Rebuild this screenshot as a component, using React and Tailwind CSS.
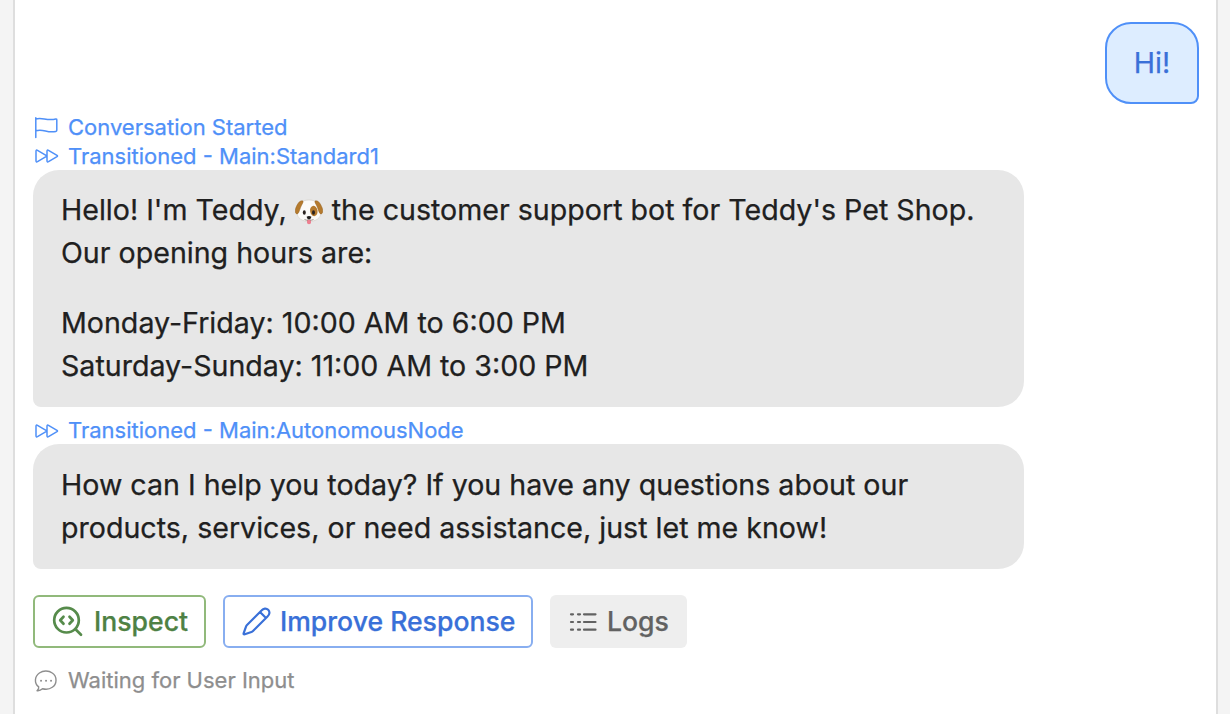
function FlagIcon() {
  return (
    <svg width="25" height="22" viewBox="0 0 25 22" fill="none" stroke="currentColor" strokeWidth="1.5" strokeLinejoin="round" strokeLinecap="round">
      <path d="M1.800 .8V20.500M1.800 2C8 -.2 12.500 4.200 21.800 2Q22.800 1.900 22.800 2.900V13.200Q22.800 14.200 21.800 14.400C13 16.600 9.500 11.200 1.800 13.800" />
    </svg>
  );
}

function ForwardIcon() {
  return (
    <svg width="25" height="16" viewBox="0 0 25 16" fill="none" stroke="currentColor" strokeWidth="1.5" strokeLinejoin="round">
      <path d="M2 3.200Q2 1.500 3.500 2.300L12 7.300Q13 8 12 8.700L3.500 13.700Q2 14.500 2 12.800ZM13 3.200Q13 1.500 14.500 2.300L23 7.300Q24 8 23 8.700L14.500 13.700Q13 14.500 13 12.800Z" />
    </svg>
  );
}

function DogFace() {
  return (
    <svg className="mr-px inline-block align-[-5px]" width="28" height="26" viewBox="0 0 28 26" role="img" aria-label="Dog face">
      <path d="M7 3C9.500 .3 18.500 .3 21 3C23.500 6 24.500 10 25.500 14C26.500 18.500 21 22.500 14 22.500S1.500 18.500 2.500 14C3.500 10 4.500 6 7 3Z" fill="#fbfaf8" stroke="#d6d1ca" strokeWidth=".7" />
      <path d="M7.800 1.900C4.500 1.200 2.500 4.800 .8 9C-.2 12 .3 14.800 2 15C4.300 14.500 4.400 10 7.200 5Q8.600 2.700 7.800 1.900Z" fill="#b57a2d" stroke="#94601f" strokeWidth=".5" />
      <path d="M20.200 1.900C23.500 1.200 25.500 4.800 27.200 9C28.200 12 27.700 14.800 26 15C23.700 14.500 23.600 10 20.800 5Q19.400 2.700 20.200 1.900Z" fill="#b57a2d" stroke="#94601f" strokeWidth=".5" />
      <ellipse cx="18.800" cy="12" rx="3.700" ry="5.200" fill="#b57a2d" transform="rotate(-12 18.800 12)" />
      <ellipse cx="9.300" cy="13.500" rx="1.500" ry="2.200" fill="#29221f" />
      <ellipse cx="18.500" cy="13.500" rx="1.500" ry="2.200" fill="#29221f" />
      <path d="M12 21H16V23.500C16 25.700 12 25.700 12 23.500Z" fill="#ed7f90" />
      <path d="M9.500 20.500Q12.300 22.300 14 20Q15.700 22.300 18.500 20.500" fill="none" stroke="#8b7e77" strokeWidth=".8" />
      <path d="M11.600 17.700Q14 16.500 16.400 17.700Q16 20.200 14 20.200T11.600 17.700Z" fill="#211d1c" />
    </svg>
  );
}

function InspectIcon() {
  return (
    <svg width="31" height="31" viewBox="0 0 31 31" fill="none" stroke="#568b4b" strokeWidth="2.700" strokeLinecap="round" strokeLinejoin="round">
      <circle cx="14.500" cy="14.200" r="12.300" />
      <path d="M23.500 23.200L29 28.800M11.500 10.700L8.200 14.200L11.500 17.700M17.500 10.700L20.800 14.200L17.500 17.700" />
    </svg>
  );
}

function PencilIcon() {
  return (
    <svg width="29" height="29" viewBox="0 0 29 29" fill="none" stroke="currentColor" strokeWidth="2.200" strokeLinecap="round" strokeLinejoin="round">
      <path d="M19.500 3.500C21.500 1.300 24.200 .9 26.200 2.800C28.100 4.700 27.700 7.500 25.500 9.500L11 24Q10.300 24.700 9.400 25L2.800 27.300Q1.200 27.700 1.700 26.200L4 19.600Q4.300 18.700 5 18ZM18 5L24 11" />
    </svg>
  );
}

function LogsIcon() {
  return (
    <svg width="28" height="20" viewBox="0 0 28 20" fill="none" stroke="currentColor" strokeWidth="2.200" strokeLinecap="round">
      <path d="M2 2.300H4M9 2.300H11M15 2.300H26.500M2 10H4M9 10H11M15 10H26.500M2 17.700H4M9 17.700H11M15 17.700H26.500" />
    </svg>
  );
}

function WaitingIcon() {
  return (
    <svg width="24" height="22" viewBox="0 0 24 22" fill="none" stroke="currentColor" strokeWidth="1.400" strokeLinejoin="round">
      <path d="M4.700 16.900C-.2 13 .7 6.200 5.400 3C9 .5 14.500 .2 18.300 3C23.300 6.500 23.200 13.800 18.300 17.300C15.500 19.300 11.800 19.700 8.500 18.800C7 20.200 5 21 3 20.700C4.500 19.500 5 18.300 4.700 16.900Z" />
      <path d="M7 10.700H7.100M12 10.700H12.100M17 10.700H17.100" strokeWidth="1.900" strokeLinecap="round" />
    </svg>
  );
}

function Status({ icon, children, className }) {
  return (
    <div className={`flex items-center whitespace-nowrap text-[22px] leading-[29px] ${className}`}>
      <span className="flex w-[35px] shrink-0 pl-px">{icon}</span>
      <span>{children}</span>
    </div>
  );
}

function BotMessage({ children, className }) {
  return (
    <div className={`w-[991px] rounded-[26px] rounded-bl-[8px] bg-[#e7e7e7] px-7 text-[28.6px] leading-[43px] whitespace-nowrap text-[#202020] ${className}`}>
      {children}
    </div>
  );
}

export default function App() {
  return (
    <div className="flex h-[714px] w-[1230px] overflow-hidden bg-[#f4f4f4] pl-[13px] font-['Inter',sans-serif] [-webkit-text-stroke:0.25px_currentColor]">
      <main className="flex w-[1205px] flex-col border-x-2 border-[#dedede] bg-white pr-[17px] pl-[18px]">
        <div className="mt-[22px] flex h-[82px] w-[94px] shrink-0 items-center justify-center self-end rounded-[26px] rounded-br-[8px] border-2 border-[#4f90f8] bg-[#ddedff] text-[28.6px] text-[#3970d8]">Hi!</div>

        <Status icon={<FlagIcon />} className="mt-[9px] text-[#4f90f8]">Conversation Started</Status>
        <Status icon={<ForwardIcon />} className="h-7 text-[#4f90f8]">Transitioned - Main:Standard1</Status>
        <BotMessage className="flex h-[237px] shrink-0 flex-col gap-[27px] pt-[18px] pb-5">
          <p>Hello! I'm Teddy, <DogFace /> the customer support bot for Teddy's Pet Shop.<br />Our opening hours are:</p>
          <p>Monday-Friday: 10:00 AM to 6:00 PM<br />Saturday-Sunday: 11:00 AM to 3:00 PM</p>
        </BotMessage>

        <Status icon={<span className="pt-0.5"><ForwardIcon /></span>} className="mt-[9px] h-7 text-[#4f90f8]">Transitioned - Main:AutonomousNode</Status>
        <BotMessage className="h-[125px] shrink-0 py-[19px]">
          <p>How can I help you today? If you have any questions about our<br />products, services, or need assistance, just let me know!</p>
        </BotMessage>

        <div className="mt-[26px] flex h-[53px] shrink-0 gap-[17px] text-[26.6px] font-medium whitespace-nowrap">
          <button className="flex w-[173px] items-center gap-[11px] rounded-md border-2 border-[#91b97b] pl-[17px] text-[#4e8144]"><InspectIcon />Inspect</button>
          <button className="flex w-[310px] items-center gap-[9px] rounded-md border-2 border-[#88aef0] pl-[17px] text-[#3970d8]"><PencilIcon />Improve Response</button>
          <button className="flex w-[137px] items-center gap-[10px] rounded-md bg-[#eeeeee] pl-[19px] text-[#626262]"><LogsIcon />Logs</button>
        </div>

        <Status icon={<WaitingIcon />} className="mt-[18px] text-[#8e8e8e]">Waiting for User Input</Status>
      </main>
    </div>
  );
}
